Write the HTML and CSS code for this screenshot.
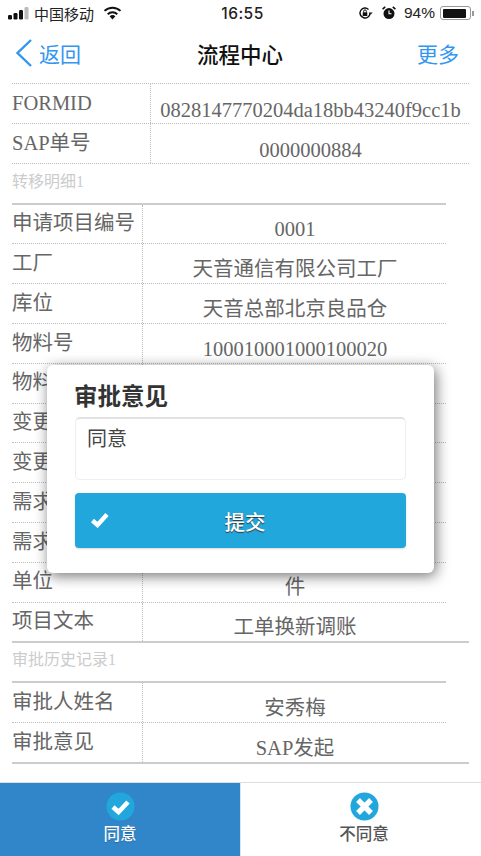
FILE: index.html
```html
<!DOCTYPE html>
<html lang="zh-CN">

<head>
  <meta charset="UTF-8">
  <meta name="viewport" content="width=device-width, initial-scale=1.0">
  <title>流程中心</title>

  <link rel="stylesheet" href="styles.css">
</head>

<body>
  <div class="status_bar">
    <div class="status_left">
      <svg width="22" height="14" viewBox="0 0 22 14">
        <rect x="0" y="9" width="4" height="4.500" rx="1.200" fill="#111" />
        <rect x="5.500" y="7" width="4" height="6.500" rx="1.200" fill="#111" />
        <rect x="11" y="4" width="4" height="9.500" rx="1.200" fill="#111" />
        <rect x="16.500" y="1" width="4" height="12.500" rx="1.200" fill="#bbb" />
      </svg>
      <span class="carrier">中国移动</span>
      <svg class="wifi" width="19" height="14" viewBox="0 0 19 14">
        <path d="M9.500 13.500 L6.600 10.200 A4.300 4.300 0 0 1 12.400 10.200 Z" fill="#111" />
        <path d="M4.700 8.200 A7 7 0 0 1 14.300 8.200" fill="none" stroke="#111" stroke-width="2" />
        <path d="M1.500 4.900 A11.500 11.500 0 0 1 17.500 4.900" fill="none" stroke="#111" stroke-width="2" />
      </svg>
    </div>
    <div class="clock">16:55</div>
    <div class="status_right">
      <svg width="15" height="14" viewBox="0 0 15 14">
        <path d="M12 7 A5 5 0 1 1 10.500 3.400" fill="none" stroke="#111" stroke-width="1.400" />
        <path d="M10.800 6.600 L14.600 6.600 L12.700 8.800 Z" fill="#111" />
        <rect x="4.700" y="6.300" width="4.600" height="3.700" rx="0.500" fill="#111" />
        <path d="M5.600 6.300 V5.300 A1.400 1.400 0 0 1 8.400 5.300 V6.300" fill="none" stroke="#111" stroke-width="1" />
      </svg>
      <svg class="alarm" width="14" height="14" viewBox="0 0 14 14">
        <circle cx="7" cy="7.600" r="5.500" fill="#111" />
        <path d="M7 4.500 V7.800 H9.500" fill="none" stroke="#fff" stroke-width="1.100" />
        <path d="M0.600 3.200 L3.200 0.800 M13.400 3.200 L10.800 0.800" stroke="#111" stroke-width="1.600" />
      </svg>
      <span class="percent">94%</span>
      <div class="battery">
        <div class="battery_level"></div>
      </div>
      <div class="battery_tip"></div>
    </div>
  </div>

  <header class="nav_bar">
    <a class="nav_back">
      <svg width="18" height="30" viewBox="0 0 18 30">
        <path d="M16 2 L2.500 15 L16 28" fill="none" stroke="#3396f0" stroke-width="2.400" />
      </svg>
      <span>返回</span>
    </a>
    <h1>流程中心</h1>
    <a class="nav_more">更多</a>
  </header>

  <main>
    <section class="form_table top_table">
      <div class="row">
        <div class="label">FORMID</div>
        <div class="value">0828147770204da18bb43240f9cc1b</div>
      </div>
      <div class="row">
        <div class="label">SAP单号</div>
        <div class="value">0000000884</div>
      </div>
    </section>

    <h2 class="section_title">转移明细1</h2>

    <section class="form_table detail_table">
      <div class="row">
        <div class="label">申请项目编号</div>
        <div class="value">0001</div>
      </div>
      <div class="row">
        <div class="label">工厂</div>
        <div class="value">天音通信有限公司工厂</div>
      </div>
      <div class="row">
        <div class="label">库位</div>
        <div class="value">天音总部北京良品仓</div>
      </div>
      <div class="row">
        <div class="label">物料号</div>
        <div class="value">100010001000100020</div>
      </div>
      <div class="row">
        <div class="label">物料</div>
        <div class="value"></div>
      </div>
      <div class="row">
        <div class="label">变更</div>
        <div class="value"></div>
      </div>
      <div class="row">
        <div class="label">变更</div>
        <div class="value"></div>
      </div>
      <div class="row">
        <div class="label">需求</div>
        <div class="value"></div>
      </div>
      <div class="row">
        <div class="label">需求</div>
        <div class="value"></div>
      </div>
      <div class="row">
        <div class="label">单位</div>
        <div class="value">件</div>
      </div>
      <div class="row last_row">
        <div class="label">项目文本</div>
        <div class="value">工单换新调账</div>
      </div>
    </section>

    <h2 class="section_title second">审批历史记录1</h2>

    <section class="form_table detail_table">
      <div class="row">
        <div class="label">审批人姓名</div>
        <div class="value">安秀梅</div>
      </div>
      <div class="row last_row">
        <div class="label">审批意见</div>
        <div class="value">SAP发起</div>
      </div>
    </section>
  </main>

  <footer class="action_bar">
    <div class="action active">
      <svg width="29" height="29" viewBox="0 0 29 29">
        <circle cx="14.500" cy="14.500" r="14" fill="#22a7dc" />
        <path d="M7 15 L12.500 20 L22 10" fill="none" stroke="#fff" stroke-width="4.600" />
      </svg>
      <span>同意</span>
    </div>
    <div class="action refuse">
      <svg width="29" height="29" viewBox="0 0 29 29">
        <circle cx="14.500" cy="14.500" r="14" fill="#22a7dc" />
        <path d="M8 8 L21 21 M21 8 L8 21" fill="none" stroke="#fff" stroke-width="5.400" />
      </svg>
      <span>不同意</span>
    </div>
  </footer>

  <div class="modal">
    <h3>审批意见</h3>
    <div class="opinion">同意</div>
    <button class="submit">
      <svg width="18" height="16" viewBox="0 0 18 16">
        <path d="M1.500 8.500 L6.500 13 L16 2.500" fill="none" stroke="#fff" stroke-width="4.400" />
      </svg>
      <span>提交</span>
    </button>
  </div>
</body>

</html>
```

FILE: styles.css
```css
* {
  box-sizing: border-box;
}

body {
  margin: 0;
  width: 481px;
  height: 856px;
  position: relative;
  overflow: hidden;
  background-color: #fff;
  font-family: "Noto Sans CJK SC", "Noto Sans", sans-serif;
  color: #666;
}

.status_bar {
  height: 27px;
  padding: 0 7px 1px 8px;
  display: flex;
  align-items: center;
  justify-content: space-between;
  color: #222;
  font-size: 15px;
}

.status_left,
.status_right {
  display: flex;
  align-items: center;
  width: 190px;
}

.status_right {
  justify-content: flex-end;
}

.carrier {
  margin-left: 4px;
}

.wifi {
  margin-left: 9px;
}

.clock {
  margin-left: 3px;
  font-family: Inter, "Liberation Sans", sans-serif;
  font-size: 15.500px;
  font-weight: 500;
  letter-spacing: 0.5px;
}

.alarm {
  margin-left: 9px;
}

.percent {
  margin-left: 8px;
  font-family: "Liberation Sans", sans-serif;
  font-size: 15.500px;
}

.battery {
  margin-left: 5px;
  width: 31px;
  height: 14px;
  border: 1px solid #999;
  border-radius: 3px;
  padding: 1.500px;
}

.battery_level {
  width: 92%;
  height: 100%;
  background-color: #111;
  border-radius: 1px;
}

.battery_tip {
  width: 2px;
  height: 5px;
  background-color: #999;
  margin-left: 1px;
}

.nav_bar {
  height: 56px;
  padding: 0 22px 4px 21px;
  display: grid;
  grid-template-columns: 1fr auto 1fr;
  align-items: center;
  color: #3396f0;
  font-size: 21px;
}

.nav_back {
  display: flex;
  align-items: center;
  gap: 6px;
  margin-left: -6px;
}

.nav_bar h1 {
  margin: 0;
  font-size: 21.500px;
  font-weight: 500;
  color: #111;
}

.nav_more {
  text-align: right;
}

main {
  padding: 0 12px;
}

.form_table {
  border-top: 1px dotted #bbb;
}

.row {
  display: flex;
  height: 39.800px;
  border-bottom: 1px dotted #bbb;
}

.label {
  flex: none;
  font-family: "Liberation Serif", "Noto Sans CJK SC", serif;
  font-size: 20.500px;
  line-height: 28px;
  padding-top: 5px;
  white-space: nowrap;
  border-right: 1px dotted #bbb;
}

.value {
  flex: 1;
  font-family: "Liberation Serif", "Noto Sans CJK SC", serif;
  font-size: 20.500px;
  line-height: 26px;
  padding: 13px 0 0 1px;
  text-align: center;
  white-space: nowrap;
}

.top_table {
  width: 457px;
}

.top_table .label {
  width: 139px;
}

.detail_table {
  width: 434px;
  border-top: 2px solid #ccc;
}

.detail_table .label {
  width: 131px;
  padding-top: 4.600px;
}

.detail_table .value {
  padding-top: 11.600px;
}

.last_row {
  position: relative;
}

.last_row::after {
  content: "";
  position: absolute;
  left: 0;
  bottom: -2px;
  width: 457px;
  height: 2px;
  background-color: #ccc;
}

.section_title {
  margin: 0;
  height: 39px;
  padding-top: 7px;
  font-family: "Liberation Serif", "Noto Sans CJK SC", serif;
  font-size: 16px;
  line-height: 22px;
  font-weight: 400;
  color: #ccc;
}

.action_bar {
  position: absolute;
  left: 0;
  bottom: 0;
  width: 481px;
  height: 74px;
  display: flex;
  background-color: #fff;
  border-top: 1px solid #ddd;
}

.action {
  display: flex;
  flex-direction: column;
  align-items: center;
  padding-top: 9px;
  font-size: 16.500px;
  line-height: 22px;
  font-weight: 500;
  color: #555;
}

.action span {
  margin-top: 1px;
}

.action.active {
  flex: none;
  width: 241px;
  background-color: #3186ca;
  color: #fff;
  text-shadow: 0 1px 0 #1f6aa5;
  border-right: 1px solid #d8e6f2;
}

.action.refuse {
  flex: 1;
  padding-left: 6px;
}

.modal {
  position: absolute;
  left: 47px;
  top: 365px;
  width: 387px;
  height: 208px;
  padding: 14px 28px 0;
  background-color: #fff;
  border-radius: 6px;
  box-shadow: 2px 3px 14px rgba(0, 0, 0, 0.55);
}

.modal h3 {
  margin: 0;
  height: 38px;
  font-size: 23.500px;
  line-height: 32px;
  font-weight: 700;
  color: #333;
  text-indent: -1px;
}

.opinion {
  height: 63px;
  padding: 5px 11px;
  border: 1px solid #eee;
  border-top: 2px solid #e2e2e2;
  border-radius: 5px;
  font-size: 20px;
  line-height: 28px;
  color: #444;
}

.submit {
  margin-top: 13px;
  width: 100%;
  height: 55px;
  padding: 0 0 0 9px;
  position: relative;
  display: flex;
  align-items: center;
  justify-content: center;
  border: none;
  border-radius: 4px;
  background-color: #22a7dc;
  color: #fff;
  font-family: inherit;
  font-size: 20.500px;
  font-weight: 500;
  text-shadow: 0 1px 1px #333;
  box-shadow: 0 1px 2px rgba(0, 0, 0, 0.15);
}

.submit svg {
  position: absolute;
  left: 16px;
  top: 19px;
}
```
